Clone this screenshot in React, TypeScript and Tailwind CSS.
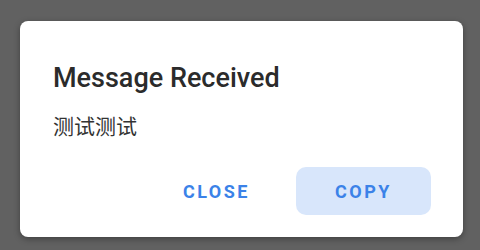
export default function App() {
  return (
    <div className="w-[480px] h-[250px] bg-[#616161] flex items-start pl-[20px] pt-[21px] font-['Roboto','Noto_Sans_CJK_SC',sans-serif]">
      <div className="w-[443px] h-[216px] bg-white rounded-[8px] shadow-[0_2px_6px_rgba(0,0,0,0.35)] flex flex-col pl-[33px] pr-[32px] pt-[41px] pb-[22px]">
        <h2 className="text-[27px] leading-[32px] font-medium text-[#2b2b2b]">Message Received</h2>
        <p className="mt-[19px] text-[21px] leading-[28px] text-[#333333]">测试测试</p>
        <div className="mt-auto flex justify-end gap-[8px]">
          <button className="h-[48px] px-[38px] rounded-[10px] text-[18px] font-bold tracking-[2.5px] text-[#3b82e8]">
            CLOSE
          </button>
          <button className="h-[48px] w-[135px] rounded-[10px] bg-[#d8e6fb] text-[18px] font-bold tracking-[2.5px] text-[#3b82e8]">
            COPY
          </button>
        </div>
      </div>
    </div>
  );
}
